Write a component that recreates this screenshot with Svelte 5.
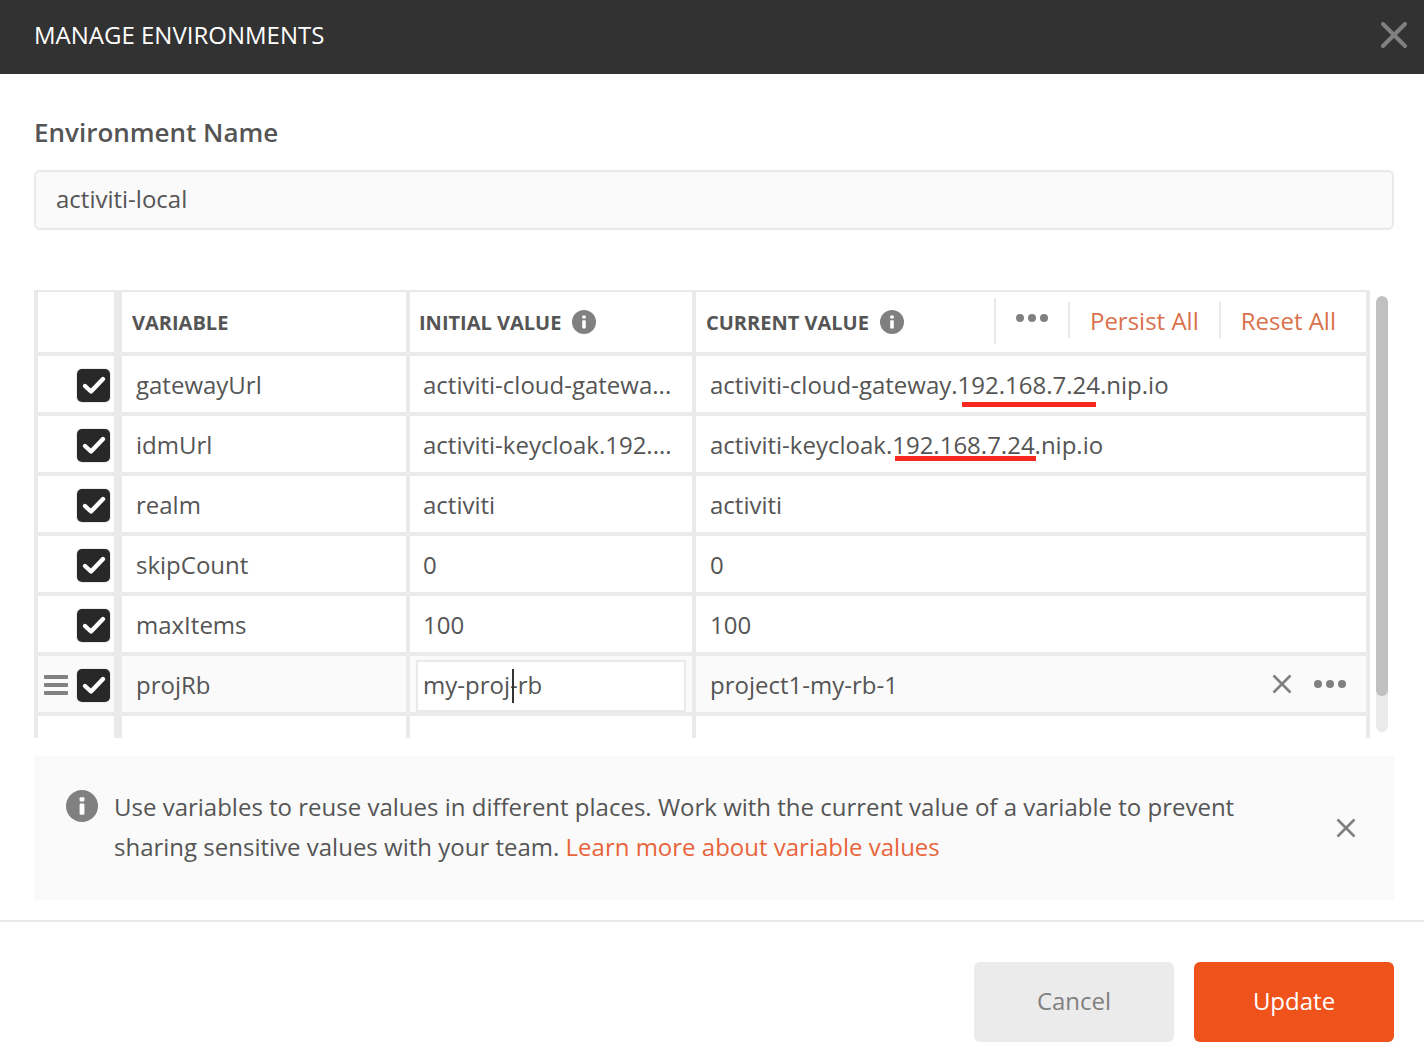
<script>
  const rows = [
    { name: 'gatewayUrl', init: 'activiti-cloud-gatewa...', cur: 'activiti-cloud-gateway.192.168.7.24.nip.io', mark: 'm1' },
    { name: 'idmUrl', init: 'activiti-keycloak.192....', cur: 'activiti-keycloak.192.168.7.24.nip.io', mark: 'm2' },
    { name: 'realm', init: 'activiti', cur: 'activiti' },
    { name: 'skipCount', init: '0', cur: '0' },
    { name: 'maxItems', init: '100', cur: '100' }
  ];
</script>

{#snippet check()}
  <span class="check">
    <svg width="26" height="20" viewBox="0 0 26 20"><path d="M4 11 L10 16.5 L22 4" fill="none" stroke="#fff" stroke-width="4.4" stroke-linecap="round" stroke-linejoin="round"/></svg>
  </span>
{/snippet}

{#snippet info(size)}
  <svg class="info" width={size} height={size} viewBox="0 0 24 24"><circle cx="12" cy="12" r="12" fill="#808080"/><rect x="10.2" y="10.2" width="3.6" height="8.4" rx="0.8" fill="#fff"/><rect x="10.2" y="5.4" width="3.6" height="3.2" rx="0.8" fill="#fff"/></svg>
{/snippet}

{#snippet dots()}
  <svg width="34" height="10" viewBox="0 0 34 10"><circle cx="5" cy="5" r="4" fill="#808080"/><circle cx="17" cy="5" r="4" fill="#808080"/><circle cx="29" cy="5" r="4" fill="#808080"/></svg>
{/snippet}

{#snippet cross(size, width)}
  <svg width={size} height={size} viewBox="0 0 20 20"><path d="M1.5 1.5 L18.5 18.5 M18.5 1.5 L1.5 18.5" stroke="#808080" stroke-width={width} fill="none"/></svg>
{/snippet}

<div class="modal">
  <header class="top">
    <h1>MANAGE ENVIRONMENTS</h1>
    <span class="close"><svg width="26" height="26" viewBox="0 0 26 26"><path d="M2 2 L24 24 M24 2 L2 24" stroke="#808080" stroke-width="4" stroke-linecap="round" fill="none"/></svg></span>
  </header>

  <section class="name">
    <div class="label">Environment Name</div>
    <div class="nameinput">activiti-local</div>
  </section>

  <section class="tablewrap">
    <div class="table">
      <div class="row head">
        <div class="c0"></div>
        <div class="c1 th">VARIABLE</div>
        <div class="c2 th">INITIAL VALUE {@render info(24)}</div>
        <div class="c3 th">
          <span class="curlabel">CURRENT VALUE {@render info(24)}</span>
          <div class="actions">
            <span class="act dotsact">{@render dots()}</span>
            <span class="act link">Persist All</span>
            <span class="act link">Reset All</span>
          </div>
        </div>
      </div>
      {#each rows as r}
        <div class="row">
          <div class="c0">{@render check()}</div>
          <div class="c1 td">{r.name}</div>
          <div class="c2 td">{r.init}</div>
          <div class="c3 td">
            {r.cur}
            {#if r.mark}<span class={'mark ' + r.mark}></span>{/if}
          </div>
        </div>
      {/each}
      <div class="row hover">
        <div class="c0">
          <span class="grip"><i></i><i></i><i></i></span>
          {@render check()}
        </div>
        <div class="c1 td">projRb</div>
        <div class="c2 td"><div class="edit">my-proj<span class="caret"></span>-rb</div></div>
        <div class="c3 td">
          <span class="grow">project1-my-rb-1</span>
          <span class="rowx">{@render cross(20, 2.6)}</span>
          {@render dots()}
        </div>
      </div>
      <div class="row last">
        <div class="c0"></div><div class="c1 td ghost">Add a new variable</div><div class="c2"></div><div class="c3"></div>
      </div>
    </div>
    <div class="scroll"><div class="thumb"></div></div>
  </section>

  <section class="notice">
    <span class="nicon">{@render info(32)}</span>
    <p>Use variables to reuse values in different places. Work with the current value of a variable to prevent sharing sensitive values with your team. <span class="orange">Learn more about variable values</span></p>
    <span class="nclose">{@render cross(20, 2.6)}</span>
  </section>

  <footer class="foot">
    <button class="cancel">Cancel</button>
    <button class="update">Update</button>
  </footer>
</div>

<style>
  :global(body) { margin: 0; background: #fff; }
  .modal { width: 1424px; height: 1060px; font-family: "Open Sans", sans-serif; font-size: 24px; color: #555; overflow: hidden; display: flex; flex-direction: column; }
  .top { height: 74px; flex: none; background: #323232; color: #fff; display: flex; align-items: center; justify-content: space-between; padding: 0 17px 0 34px; }
  h1 { margin: 0; font-size: 24px; font-weight: 400; position: relative; top: -3px; }
  .close { display: flex; position: relative; top: -2px; }
  .name { padding: 40px 30px 0 34px; height: 176px; box-sizing: border-box; flex: none; }
  .label { font-size: 26px; font-weight: 600; line-height: 36px; height: 56px; }
  .nameinput { height: 60px; box-sizing: border-box; border: 2px solid #eaeaea; border-radius: 6px; background: #fafafa; padding: 0 20px; line-height: 53px; }
  .tablewrap { flex: none; margin: 40px 0 0 34px; width: 1354px; height: 448px; display: flex; gap: 6px; }
  .table { width: 1336px; height: 448px; overflow: hidden; background: #fff; border-left: 4px solid #eaeaea; border-right: 4px solid #eaeaea; border-top: 2px solid #eaeaea; box-sizing: border-box; }
  .row { display: grid; grid-template-columns: 76px 296px 286px 1fr; height: 60px; box-sizing: border-box; border-bottom: 4px solid #eaeaea; }
  .row.head { height: 64px; }
  .row.last { border-bottom: 0; }
  .row > div { box-sizing: border-box; display: flex; align-items: center; min-width: 0; }
  .c0 { justify-content: flex-end; padding: 2px 4px 0 0; gap: 9px; }
  .c1 { border-left: 8px solid #eaeaea; border-right: 4px solid #eaeaea; }
  .c2 { border-right: 4px solid #eaeaea; }
  .th { font-size: 20px; font-weight: 700; white-space: nowrap; }
  .head .c1 { padding-left: 10px; }
  .head .c2 { padding-left: 9px; gap: 11px; }
  .head .c3 { padding-left: 10px; justify-content: space-between; }
  .curlabel { display: inline-flex; align-items: center; gap: 11px; }
  .info { display: block; flex: none; }
  .actions { display: flex; align-items: center; font-weight: 400; font-size: 24px; height: 100%; padding-right: 10px; }
  .act { height: 36px; display: flex; align-items: center; padding: 0 20px; border-left: 2px solid #eaeaea; position: relative; top: -2px; }
  .dotsact { height: 46px; top: -1px; box-sizing: border-box; padding: 0 19px; align-items: flex-start; }
  .dotsact :global(svg) { margin-top: 15px; }
  .link { color: #d8714c; }
  .td { white-space: nowrap; }
  .c1.td { padding-left: 14px; }
  .c2.td { padding-left: 13px; }
  .c3.td { padding-left: 14px; padding-right: 19px; position: relative; }
  .ghost { color: #e6e6e6; }
  .mark { position: absolute; height: 5px; background: #f5291f; }
  .m1 { left: 266px; width: 134px; top: 46px; }
  .m2 { left: 199px; width: 141px; top: 40px; }
  .check { width: 33px; height: 33px; border-radius: 5px; background: #282828; display: flex; align-items: center; justify-content: center; box-shadow: 0 0 0 1px #eaeaea; }
  .hover { background: #fafafa; }
  .grip { width: 24px; display: flex; flex-direction: column; gap: 4px; }
  .grip i { display: block; height: 4px; background: #808080; border-radius: 1px; }
  .hover .c2.td { padding-left: 6px; padding-right: 6px; }
  .edit { flex: 1; height: 52px; margin-top: 4px; box-sizing: border-box; background: #fff; border: 2px solid #eaeaea; padding: 0 0 4px 5px; display: flex; align-items: center; }
  .caret { display: inline-block; width: 2px; height: 34px; background: #333; margin: 0 -1px; position: relative; left: 3px; top: 2px; }
  .grow { flex: 1; }
  .rowx { display: flex; margin-right: 21px; }
  .scroll { width: 12px; height: 436px; margin-top: 6px; border-radius: 6px; background: #eaeaea; overflow: hidden; }
  .thumb { height: 400px; background: #c0c0c0; border-radius: 6px; }
  .notice { flex: none; margin: 18px 30px 0 34px; height: 144px; box-sizing: border-box; background: #fafafa; display: flex; padding: 34px 38px 0 32px; position: relative; }
  .nicon { flex: none; width: 48px; }
  p { margin: 0; line-height: 40px; width: 1140px; position: relative; top: -3px; }
  .orange { color: #e8643a; }
  .nclose { position: absolute; right: 38px; top: 62px; display: flex; }
  .foot { flex: none; margin-top: 20px; border-top: 2px solid #eaeaea; display: flex; justify-content: flex-end; gap: 20px; padding: 40px 30px 0 0; }
  button { width: 200px; height: 80px; border: 0; border-radius: 6px; font: inherit; padding: 0 0 4px; }
  .cancel { background: #ebebeb; color: #808080; }
  .update { background: #f0521c; color: #fff; }
</style>
